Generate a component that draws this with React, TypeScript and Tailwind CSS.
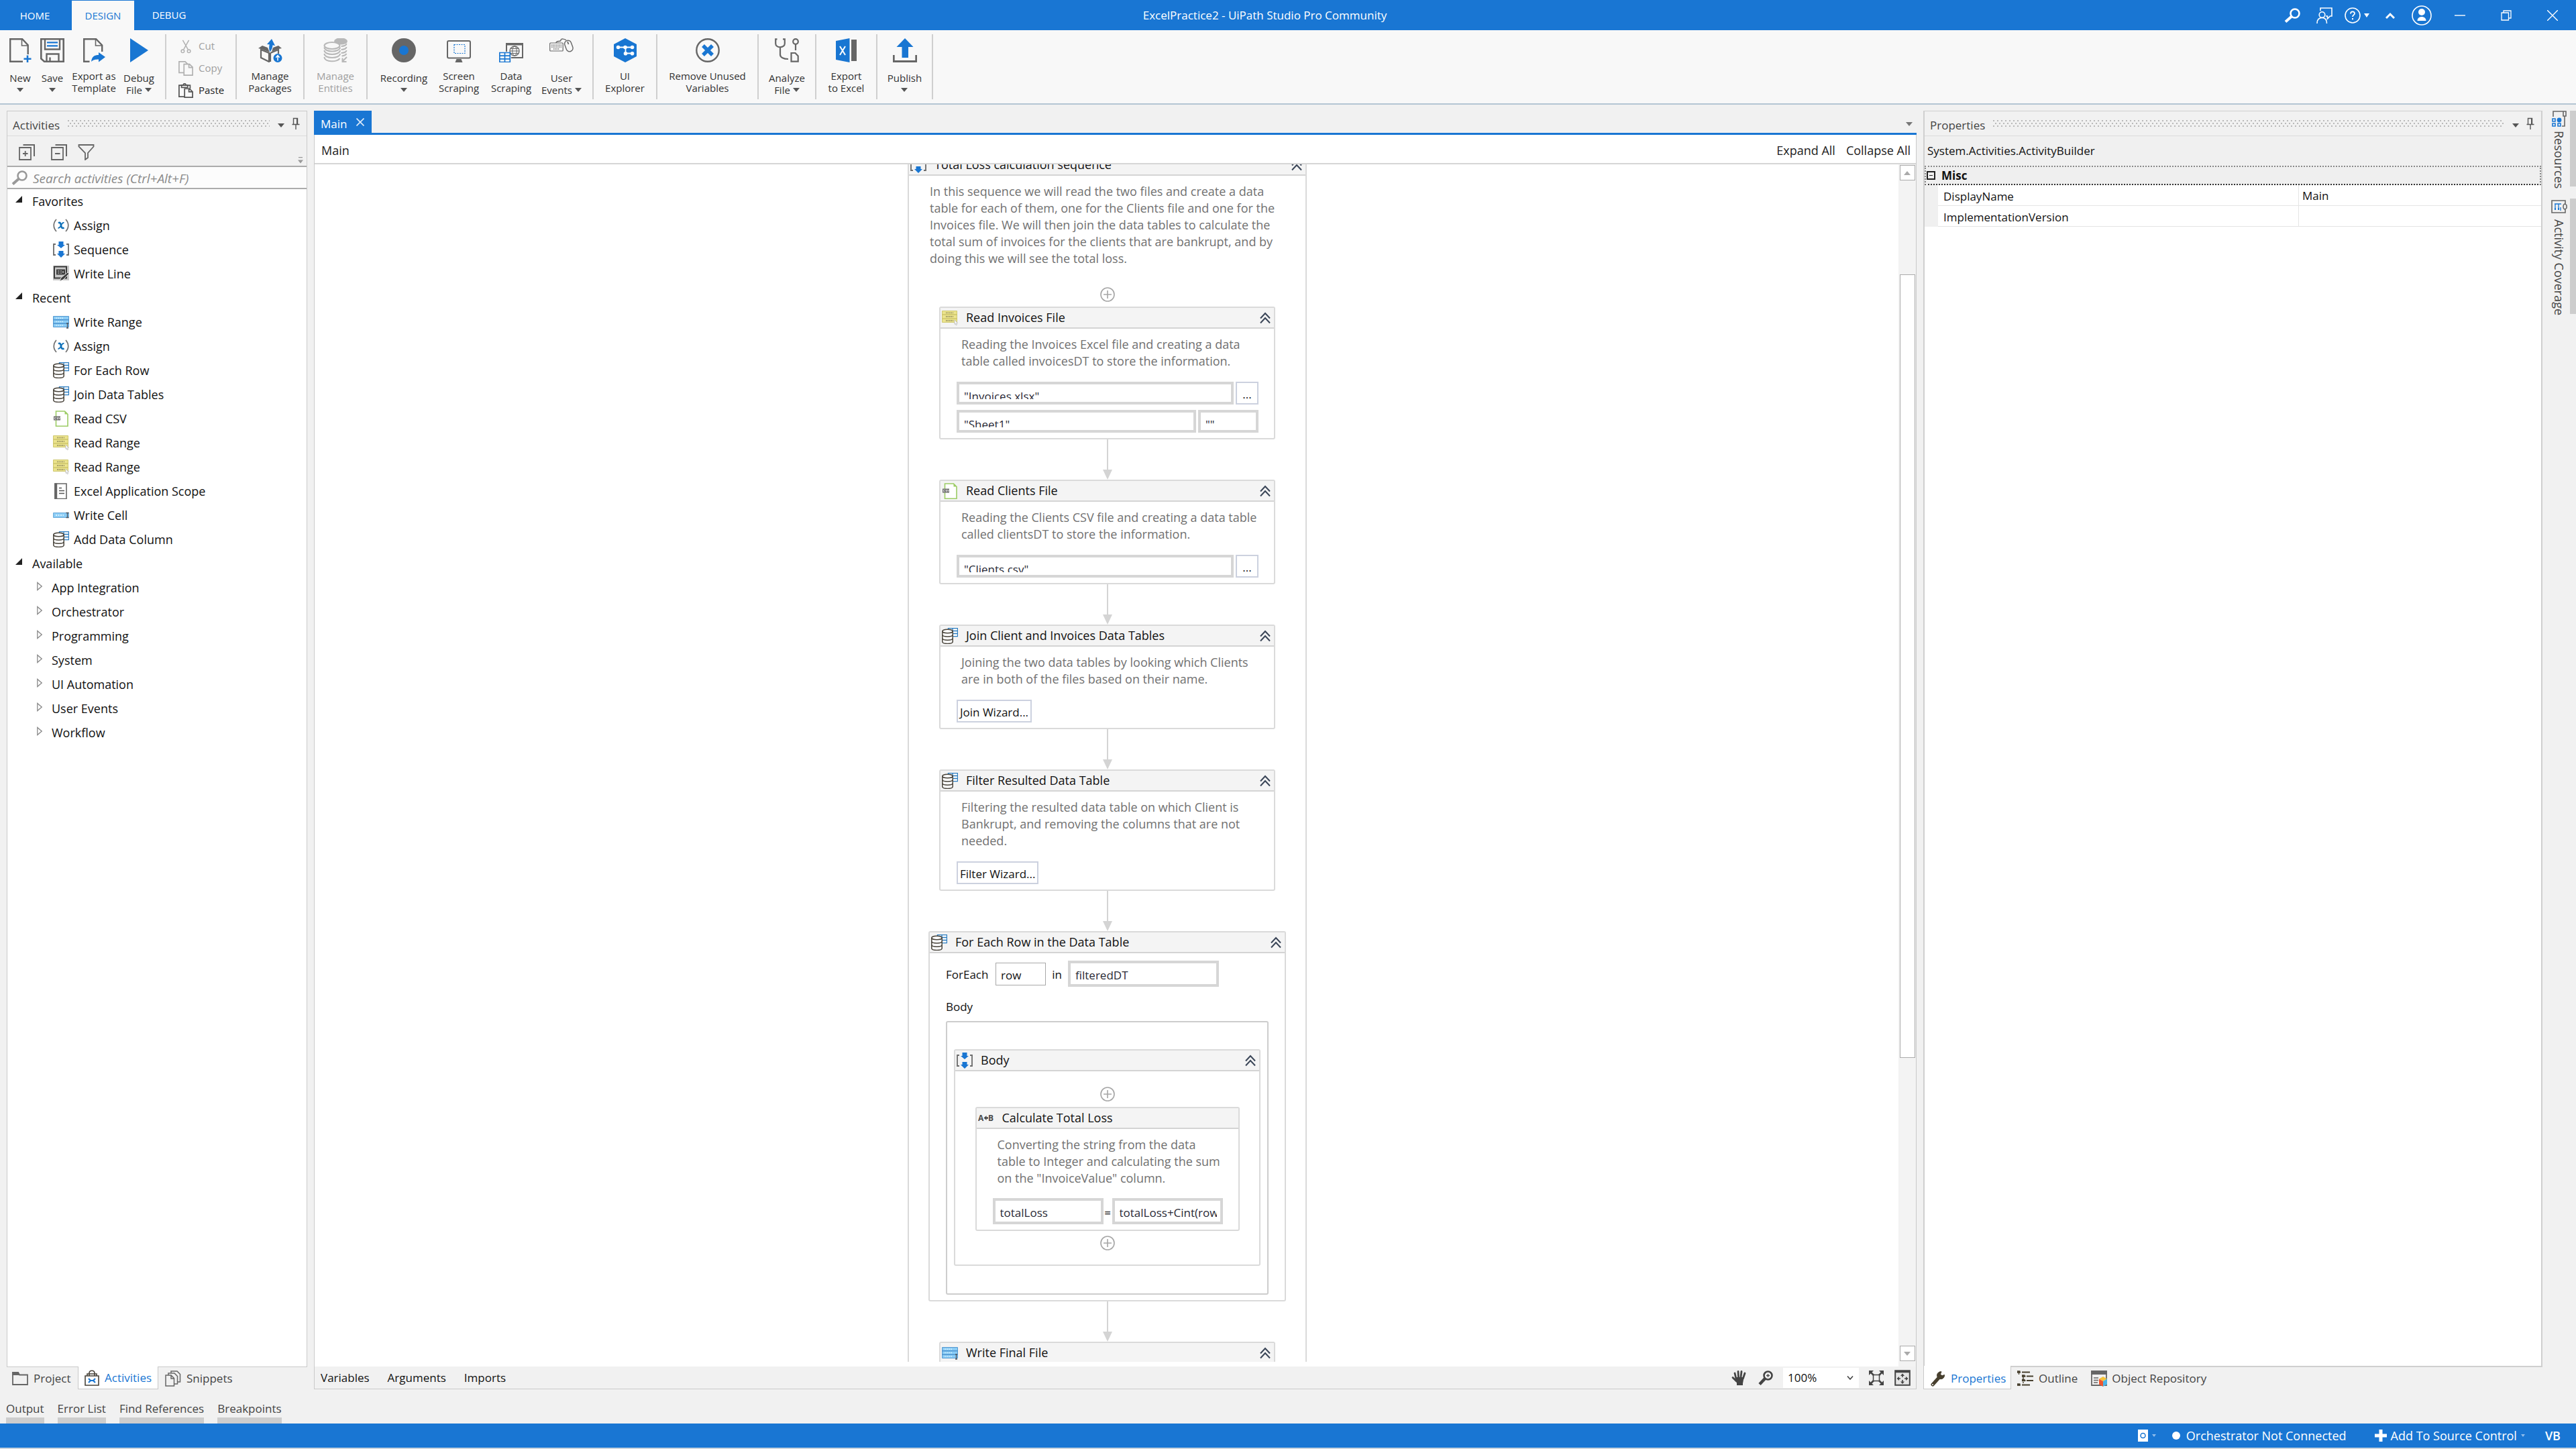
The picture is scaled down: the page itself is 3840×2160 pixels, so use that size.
import type { ReactNode } from "react";

type IconProps = { className?: string };

/* ---------- activity icons ---------- */

const AssignIcon = () => (
  <svg viewBox="0 0 24 24" className="size-6 shrink-0">
    <path d="M5 3C0 8.500 0 15.500 5 21M19 3c5 5.500 5 12.500 0 18" fill="none" stroke="#707070" strokeWidth="1.700" />
    <path d="M8 8.500c2.500-1.500 3.500 0 4 3.500s1.500 5 4.500 3.300" fill="none" stroke="#0f70b8" strokeWidth="2.600" />
    <path d="M16.500 8c-2-.6-3.500 1.500-4.600 4s-2.400 4.300-4.400 3.600" fill="none" stroke="#0f70b8" strokeWidth="1.800" />
  </svg>
);

const SequenceIcon = () => (
  <svg viewBox="0 0 24 24" className="size-6 shrink-0">
    <path d="M4 4H1v16h3M20 4h3v16h-3" fill="none" stroke="#6b6b6b" strokeWidth="1.800" />
    <path d="M8.500 0h7v5h2.500l-6 5-6-5h2.500zM8.500 14h7v4h2.500l-6 6-6-6h2.500z" fill="#1976d2" />
  </svg>
);

const WriteLineIcon = () => (
  <svg viewBox="0 0 24 24" className="size-6 shrink-0">
    <path d="M0 0h24v22H0z" fill="#c9c9c9" />
    <path d="M2 1.500h18v17H2z" fill="none" stroke="#3c3c3c" strokeWidth="2" />
    <path d="M5 5.500h13v8H5z" fill="#3c3c3c" />
    <path d="M7 8h2.500M7 11h2.500M11 8h2M11 11h2M15 8v3" stroke="#ddd" strokeWidth="1.200" />
    <path d="M22 10l2 2-9 9-5 2 2-5z" fill="#3c3c3c" stroke="#e5e5e5" strokeWidth="1" />
  </svg>
);

const WriteRangeIcon = () => (
  <svg viewBox="0 0 24 24" className="size-6 shrink-0">
    <path d="M.500 3.500h23v16H.500z" fill="#8accf5" stroke="#5598d0" />
    <path d="M0 8.800h24M0 14.200h24" stroke="#4c93d0" strokeWidth="1.400" />
    <path d="M4 6.200h12M4 11.500h12M4 17h12" stroke="#c9e9fc" strokeWidth="1.600" strokeDasharray="2 1" />
    <path d="M20 14h3M21.500 14v7M20 21h3" stroke="#4d5560" strokeWidth="1.300" />
  </svg>
);

const WriteCellIcon = () => (
  <svg viewBox="0 0 24 24" className="size-6 shrink-0">
    <path d="M.500 8.500h23v7H.500z" fill="#8accf5" stroke="#6aa9d8" />
    <path d="M4 12h12" stroke="#d9f0fd" strokeWidth="1.800" strokeDasharray="2 1.500" />
    <path d="M19.500 8.500h4M21.500 8.500v7M19.500 15.500h4" stroke="#4d5560" strokeWidth="1.300" />
  </svg>
);

const ReadRangeIcon = () => (
  <svg viewBox="0 0 24 24" className="size-6 shrink-0">
    <path d="M.500 1.500h22v17H.500z" fill="#ebe38d" stroke="#cfc870" />
    <path d="M0 7h23M0 13h23" stroke="#cdc569" strokeWidth="1.300" />
    <path d="M6 4.300h11M6 10h11M6 16h11" stroke="#9a9460" strokeWidth="1.800" strokeDasharray="1.500 1" />
    <path d="M19 15l4.500 4.500-2 .2 1 2.500-1.300.5-1-2.400-1.200 1z" fill="#fff" stroke="#b5b5b5" strokeWidth=".8" />
  </svg>
);

const DatabaseIcon = () => (
  <svg viewBox="0 0 24 24" className="size-6 shrink-0">
    <path d="M9.500.700h14v12h-14zM9.500 4.500h14M9.500 8.500h14M16 .700v12" fill="#fff" stroke="#2b7cc0" strokeWidth="1.300" />
    <path d="M.800 5v15.500c0 4 15.400 4 15.400 0V5" fill="#fff" />
    <ellipse cx="8.500" cy="5" rx="7.700" ry="2.800" fill="#fff" stroke="#48433a" strokeWidth="1.500" />
    <path d="M.800 5v15.500c0 3.900 15.400 3.900 15.400 0V5M.800 10c0 3.900 15.400 3.900 15.400 0M.800 15.300c0 3.900 15.400 3.900 15.400 0" fill="none" stroke="#48433a" strokeWidth="1.500" />
  </svg>
);

const CsvIcon = () => (
  <svg viewBox="0 0 24 24" className="size-6 shrink-0">
    <path d="M4.500 1h13l4.500 4.500V23.300H4.500z" fill="#fff" stroke="#9ccc65" strokeWidth="1.600" />
    <path d="M17.500 1v4.500H22z" fill="#9ccc65" />
    <path d="M1 8.500h10v6H1z" fill="#6a6a6a" />
    <path d="M4.500 10.300H2.500v2.500h2M7.500 10.300H6v1.200h1.300v1.300H5.800M8.500 10l1 2.800 1-2.800" fill="none" stroke="#eee" strokeWidth=".8" />
  </svg>
);

const ExcelScopeIcon = () => (
  <svg viewBox="0 0 24 24" className="size-6 shrink-0">
    <path d="M3 1h17v22.500H3z" fill="#fff" stroke="#666" strokeWidth="1.600" />
    <path d="M2.200.300h4V24h-4z" fill="#666" />
    <path d="M9 7.500h4M9 11.500h8M9 15.500h8" stroke="#555" strokeWidth="1.400" />
  </svg>
);

const AssignBadge = () => (
  <svg viewBox="0 0 24 24" className="size-6 shrink-0" fontFamily="Open Sans" fontWeight="700" fontSize="12" fill="#4a4a4a">
    <text x="0" y="16">A</text>
    <text x="15" y="16">B</text>
    <path d="M8.500 11.500l4-3.500v2.300H15v2.400h-2.500V15z" />
  </svg>
);

/* ---------- shared bits ---------- */

const CaretDown = ({ className = "fill-[#555]" }: IconProps) => (
  <svg viewBox="0 0 10 6" className={"h-[6px] w-[10px] shrink-0 " + className}>
    <path d="M0 0h10L5 6z" />
  </svg>
);

const PinIcon = () => (
  <svg viewBox="0 0 12 18" className="h-[18px] w-3" fill="none" stroke="#555" strokeWidth="1.400">
    <path d="M2.500 1.500h6v9h-6zM.500 10.500h11M6 10.500V18" />
    <path d="M8 1.500v9" strokeWidth="2" />
  </svg>
);

const SearchGlass = ({ className = "" }: IconProps) => (
  <svg viewBox="0 0 24 22" className={className} fill="none" stroke="currentColor">
    <circle cx="16" cy="8" r="6.500" strokeWidth="2.600" />
    <path d="M11 12.500L2 20.500" strokeWidth="4" />
  </svg>
);

const GripDots = ({ id }: { id: string }) => (
  <svg className="h-[10px] min-w-0 flex-1">
    <defs>
      <pattern id={id} width="6" height="8" patternUnits="userSpaceOnUse">
        <path d="M0 0h2v2H0zM3 4h2v2H3z" fill="#b9b9b9" />
      </pattern>
    </defs>
    <rect width="100%" height="10" fill={`url(#${id})`} />
  </svg>
);

const PanelHeader = ({ title, id }: { title: string; id: string }) => (
  <div className="flex h-[37px] shrink-0 items-center border-b border-[#dcdcdc] pl-2 pr-[10px]">
    <h2 className="mr-3 pt-[6px] text-[17px] text-[#444]">{title}</h2>
    <GripDots id={id} />
    <button aria-label={title + " window options"} className="ml-3 pt-[6px]">
      <CaretDown className="fill-[#555]" />
    </button>
    <button aria-label={"Pin " + title} className="ml-[11px]">
      <PinIcon />
    </button>
  </div>
);

/* ---------- ribbon ---------- */

const NewIcon = () => (
  <svg viewBox="0 0 33 36" className="h-9 w-[33px]" fill="none">
    <path d="M20 34.800H1.200V1.200h18l8.500 9V24" stroke="#666" strokeWidth="2.400" />
    <path d="M18.500 1v10h9" stroke="#666" strokeWidth="1.600" />
    <path d="M27 25.500v10.500M21.500 30.700h11" stroke="#1976d2" strokeWidth="2.600" />
  </svg>
);
const SaveIcon = () => (
  <svg viewBox="0 0 36 36" className="size-9" fill="none">
    <path d="M1.300 1.300h33.400v33.400H6L1.300 30.500z" stroke="#666" strokeWidth="2.600" />
    <path d="M7 1v15.500h22V1M9.500 35V23.500h18V35M14.500 35v-6.500" stroke="#666" strokeWidth="2.400" />
    <path d="M10 6.300h16M10 11.300h16" stroke="#1976d2" strokeWidth="2.200" />
  </svg>
);
const ExportTemplateIcon = () => (
  <svg viewBox="0 0 33 36" className="h-9 w-[33px]" fill="none">
    <path d="M9.500 34.800H1.200V1.200h18l9 9.300V20" stroke="#666" strokeWidth="2.400" />
    <path d="M18.500 1v10h9.500" stroke="#666" strokeWidth="1.600" />
    <path d="M12 35c1-8 5-10 11-10v-4l10 7-10 7.500v-4c-5 0-8 .5-11 3.500z" fill="#1976d2" />
  </svg>
);
const PlayIcon = () => (
  <svg viewBox="0 0 27 36" className="h-9 w-[27px]">
    <path d="M0 0l27 18L0 36z" fill="#1976d2" />
  </svg>
);
const PackagesIcon = () => (
  <svg viewBox="0 0 36 36" className="size-9">
    <path d="M4 17l12 5v13L4 29z" fill="none" stroke="#666" strokeWidth="2.200" />
    <path d="M18 22l12-5v6M18 22v13" fill="none" stroke="#666" strokeWidth="2.200" />
    <path d="M6 11l8 3 3 7-13-5-4-1zM30 11l-8 3-2 6 10-4 5-1z" fill="#666" />
    <path d="M13 9L20 1l5 10-3.500-.8c-.3 4-1.500 7-4 10-1.500-3-1.800-6-.8-11z" fill="#1976d2" />
    <circle cx="29" cy="29.500" r="6.500" fill="#1976d2" />
    <path d="M29 33.500v-7M26.300 28.700l2.700-3 2.700 3" fill="none" stroke="#fff" strokeWidth="1.500" />
  </svg>
);
const EntitiesIcon = () => (
  <svg viewBox="0 0 36 36" className="size-9" fill="none" stroke="#b8b8b8" strokeWidth="2">
    <ellipse cx="26" cy="4.500" rx="9" ry="4" fill="#b8b8b8" />
    <path d="M34.500 8c0 2-3 4-8 4M34.500 13c0 2-3 4-8 4M34.500 18c0 2-3 4-8 4M34.500 23c-1 2-3 3-7 3.500" />
    <ellipse cx="13" cy="11" rx="11.500" ry="5" fill="#f8f8f8" />
    <path d="M1.500 13.500c0 8 23 8 23.500 0M1.500 18c0 8 23 8 23.500 0M1.500 23c0 8 23 8 23.500 0M1.500 28c0 8 20 8 23 2" />
    <path d="M35 28l-6.500 6.500M28.500 29.500v5.500h6" />
  </svg>
);
const RecordIcon = () => (
  <svg viewBox="0 0 36 36" className="size-9">
    <circle cx="18" cy="18" r="18" fill="#666" />
    <circle cx="18" cy="18" r="7" fill="#1976d2" />
  </svg>
);
const ScreenIcon = () => (
  <svg viewBox="0 0 36 36" className="size-9" fill="none">
    <rect x="1" y="4" width="34" height="25.500" rx="2" stroke="#666" strokeWidth="2" />
    <path d="M14.500 31h7l2 5h-11z" fill="#666" />
    <path d="M11 9.500h16v13H11z" stroke="#1976d2" strokeWidth="1.200" strokeDasharray="2 1.500" />
  </svg>
);
const DataScrapeIcon = () => (
  <svg viewBox="0 0 36 36" className="size-9" fill="none">
    <path d="M11 20V8.500h24v20.500H18" stroke="#666" strokeWidth="2" />
    <path d="M10 7h26v3.500H10z" fill="#666" />
    <circle cx="23" cy="19" r="7" stroke="#666" strokeWidth="1.300" />
    <ellipse cx="23" cy="19" rx="3.200" ry="7" stroke="#666" strokeWidth="1" />
    <path d="M16 19h14M17 15.500h12M17 22.500h12" stroke="#666" />
    <path d="M.800 21.500h15.500v14H.800z" fill="#f8f8f8" />
    <path d="M.800 21.500h15.500v14H.800zM8.500 21.500v14M.800 26.200h15.500M.800 30.800h15.500" stroke="#1976d2" strokeWidth="1.700" />
  </svg>
);
const UserEventsIcon = () => (
  <svg viewBox="0 0 36 36" className="size-9" fill="none" stroke="#666">
    <rect x=".7" y="7" width="19.500" height="12" rx="1" strokeWidth="1.200" />
    <path d="M3 10.300h15M3 13h15M6 16h9" strokeWidth="1.600" strokeDasharray="1.300 1" />
    <path d="M10 7c0-4 7-1 7-4s6-2 8 0" strokeWidth="1.500" />
    <rect x="24" y="3" width="10" height="17" rx="5" transform="rotate(-20 29 12)" strokeWidth="1.400" />
    <path d="M27 5l1.500 4" strokeWidth="1.800" />
  </svg>
);
const ExplorerIcon = () => (
  <svg viewBox="0 0 34 36" className="h-9 w-[34px]">
    <path d="M17 0l17 9v18l-17 9L0 27V9z" fill="#1976d2" />
    <path d="M6 13.500h22M17.500 13.500v9h10" fill="none" stroke="#fff" strokeWidth="1.800" />
    <g fill="#fff">
      <circle cx="6.500" cy="13.500" r="2.800" /><circle cx="17" cy="13.500" r="2.800" /><circle cx="27.500" cy="13.500" r="2.800" />
      <circle cx="17.500" cy="22.800" r="2.800" /><circle cx="27.500" cy="22.800" r="2.800" />
    </g>
  </svg>
);
const RemoveIcon = () => (
  <svg viewBox="0 0 36 36" className="size-9" fill="none">
    <circle cx="18" cy="18" r="16.700" stroke="#666" strokeWidth="2.400" />
    <path d="M11 11l14 14M25 11L11 25" stroke="#1976d2" strokeWidth="5.500" />
  </svg>
);
const AnalyzeIcon = () => (
  <svg viewBox="0 0 36 36" className="size-9" fill="none" stroke="#666" strokeWidth="2.200">
    <path d="M3.500 1.300H1.200V8c0 7 13.600 7 13.600 0V1.300H12M8 13.500v11c0 4 5 6.500 12 6.500" />
    <circle cx="31" cy="5" r="3.800" />
    <path d="M31 9v9M24.500 22h6l4.200 4.500v8.200H24.500z" />
  </svg>
);
const ExcelIcon = () => (
  <svg viewBox="0 0 31 36" className="h-9 w-[31px]">
    <path d="M0 4L20.500 0v36L0 32z" fill="#1976d2" />
    <path d="M23 2h8v32h-8z" fill="#666" />
    <path d="M6 12l8 13M14 12L6 25" stroke="#fff" strokeWidth="2" />
  </svg>
);
const PublishIcon = () => (
  <svg viewBox="0 0 36 36" className="size-9">
    <path d="M18 0l12.500 13H23v16h-9.500V13H5.500z" fill="#1976d2" />
    <path d="M1.300 25v9.500h33.400V25" fill="none" stroke="#666" strokeWidth="2.800" />
  </svg>
);

type RibbonItem = { icon: ReactNode; lines: string[]; arrow?: boolean; width: string; disabled?: boolean };

const RibbonButton = ({ icon, lines, arrow, width, disabled }: RibbonItem) => (
  <button className={"flex shrink-0 flex-col items-center pt-3 " + width} disabled={disabled}>
    {icon}
    <span
      className={
        "flex flex-col items-center whitespace-nowrap text-[15px] leading-[18px] " +
        (arrow ? "mt-[14px] " : "mt-[11px] ") +
        (disabled ? "text-[#a0a0a0]" : "text-[#333]")
      }
    >
      <span>{lines[0]}</span>
      {lines[1] && !arrow && <span>{lines[1]}</span>}
      {arrow && (
        <span className="flex h-[18px] items-center gap-1">
          {lines[1]}
          <CaretDown />
        </span>
      )}
    </span>
  </button>
);

const Divider = () => <div className="my-[6px] w-[2px] shrink-0 bg-[#cfcfcf]" />;

const groups: { pad: string; items: RibbonItem[] }[] = [
  { pad: "w-[99px]", items: [{ icon: <PackagesIcon />, lines: ["Manage", "Packages"], width: "w-full" }] },
  { pad: "w-[92px]", items: [{ icon: <EntitiesIcon />, lines: ["Manage", "Entities"], width: "w-full", disabled: true }] },
  {
    pad: "pl-2 pr-[13px]",
    items: [
      { icon: <RecordIcon />, lines: ["Recording"], arrow: true, width: "w-[92px]" },
      { icon: <ScreenIcon />, lines: ["Screen", "Scraping"], width: "w-[72px]" },
      { icon: <DataScrapeIcon />, lines: ["Data", "Scraping"], width: "w-[84px]" },
      { icon: <UserEventsIcon />, lines: ["User", "Events"], arrow: true, width: "w-[66px]" },
    ],
  },
  { pad: "w-[93px]", items: [{ icon: <ExplorerIcon />, lines: ["UI", "Explorer"], width: "w-full" }] },
  { pad: "w-[149px]", items: [{ icon: <RemoveIcon />, lines: ["Remove Unused", "Variables"], width: "w-full" }] },
  { pad: "w-[84px]", items: [{ icon: <AnalyzeIcon />, lines: ["Analyze", "File"], arrow: true, width: "w-full" }] },
  { pad: "w-[89px]", items: [{ icon: <ExcelIcon />, lines: ["Export", "to Excel"], width: "w-full" }] },
  { pad: "w-[81px]", items: [{ icon: <PublishIcon />, lines: ["Publish"], arrow: true, width: "w-full" }] },
];

const ClipboardRow = ({ icon, label, disabled }: { icon: ReactNode; label: string; disabled?: boolean }) => (
  <button disabled={disabled} className={"flex h-[33px] items-center gap-2 text-[15px] " + (disabled ? "text-[#a0a0a0]" : "text-[#222]")}>
    {icon}
    {label}
  </button>
);

const Ribbon = () => (
  <div className="flex h-[111px] shrink-0 border-b-2 border-[#b4c5d3] bg-[#f8f8f8]">
    <div className="flex pl-[6px] pr-[10px]">
      <RibbonButton icon={<NewIcon />} lines={["New"]} arrow width="w-12" />
      <RibbonButton icon={<SaveIcon />} lines={["Save"]} arrow width="w-12" />
      <RibbonButton icon={<ExportTemplateIcon />} lines={["Export as", "Template"]} width="w-[76px]" />
      <RibbonButton icon={<PlayIcon />} lines={["Debug", "File"]} arrow width="w-[58px]" />
    </div>
    <Divider />
    <div className="flex w-[103px] flex-col pl-[18px] pt-[7px]">
      <ClipboardRow
        disabled
        label="Cut"
        icon={
          <svg viewBox="0 0 24 24" className="size-[22px]" fill="none" stroke="#b0b0b0" strokeWidth="1.600">
            <path d="M7 2l8.500 15M17 2L8.500 17" />
            <circle cx="7" cy="20" r="2.500" /><circle cx="17" cy="20" r="2.500" />
          </svg>
        }
      />
      <ClipboardRow
        disabled
        label="Copy"
        icon={
          <svg viewBox="0 0 24 24" className="size-[22px]" fill="#f8f8f8" stroke="#b0b0b0" strokeWidth="1.800">
            <path d="M1 1h10l4 4v14H1z" />
            <path d="M9 5h9l5 5v13H9zM17 5v5.500h6" />
          </svg>
        }
      />
      <ClipboardRow
        label="Paste"
        icon={
          <svg viewBox="0 0 24 24" className="size-[22px]" fill="#f8f8f8" stroke="#555" strokeWidth="1.900">
            <path d="M10 22H1V3.500h18V9M5 7V3h3c0-3 4-3 4 0h3v4z" />
            <path d="M10 9h8l5 5v9H10zM17 9v5h6" />
          </svg>
        }
      />
    </div>
    <Divider />
    {groups.map((g, i) => (
      <div key={i} className="flex">
        <div className={"flex " + g.pad}>
          {g.items.map((it) => (
            <RibbonButton key={it.lines.join()} {...it} />
          ))}
        </div>
        <Divider />
      </div>
    ))}
  </div>
);

/* ---------- title bar ---------- */

const TitleBar = () => (
  <header className="flex h-[45px] shrink-0 items-stretch bg-[#1976d3] text-white">
    <nav className="flex w-[330px] items-stretch text-[15px]">
      <button className="w-[107px] pr-[3px] pt-[2px] text-center">HOME</button>
      <button className="mt-px w-[93px] bg-[#f8f8f8] text-center text-[#1976d3]">DESIGN</button>
      <button className="w-[104px] text-center">DEBUG</button>
    </nav>
    <h1 className="flex-1 self-center pl-9 text-center text-[17px]">ExcelPractice2 - UiPath Studio Pro Community</h1>
    <div className="flex w-[435px] items-center">
      <button aria-label="Search"><SearchGlass className="h-[22px] w-6" /></button>
      <button aria-label="Feedback" className="ml-6">
        <svg viewBox="0 0 24 24" className="size-6" fill="none" stroke="currentColor" strokeWidth="1.600">
          <path d="M6 5V1h17v12h-2.500l-4 4v-4H14" />
          <circle cx="8.500" cy="11" r="4.300" />
          <path d="M1 24c0-5.500 3-8.500 7.500-8.500S15.500 18.500 15.500 24" />
        </svg>
      </button>
      <button aria-label="Help" className="ml-[18px] flex items-center gap-[5px]">
        <svg viewBox="0 0 24 24" className="size-6" fill="none" stroke="currentColor">
          <circle cx="12" cy="12" r="11" strokeWidth="1.600" />
          <path d="M9 9.500c0-4 6-4 6-.5 0 2.500-3 2.300-3 5" strokeWidth="1.800" />
          <path d="M12 16v2.200" strokeWidth="2" />
        </svg>
        <svg viewBox="0 0 8 6" className="h-[6px] w-2 fill-white"><path d="M0 0h8L4 6z" /></svg>
      </button>
      <button aria-label="Collapse ribbon" className="ml-6">
        <svg viewBox="0 0 14 10" className="h-[10px] w-[14px]" fill="none" stroke="currentColor" strokeWidth="3"><path d="M1 9l6-6 6 6" /></svg>
      </button>
      <button aria-label="Account" className="ml-[25px]">
        <svg viewBox="0 0 30 30" className="size-[30px]" fill="none">
          <circle cx="15" cy="15" r="14" stroke="#fff" strokeWidth="1.600" />
          <circle cx="15" cy="10" r="5" fill="#fff" />
          <path d="M8.500 23c0-8 13-8 13 0z" fill="#fff" />
        </svg>
      </button>
      <button aria-label="Minimize" className="ml-[34px]">
        <svg viewBox="0 0 16 16" className="size-4" stroke="#fff" strokeWidth="1.400"><path d="M0 8h16" /></svg>
      </button>
      <button aria-label="Restore" className="ml-[53px]">
        <svg viewBox="0 0 16 16" className="size-4" fill="none" stroke="#fff" strokeWidth="1.300"><path d="M1 4h10.500v11H1zM4 4V1h11v11h-3.500" /></svg>
      </button>
      <button aria-label="Close" className="ml-[53px]">
        <svg viewBox="0 0 16 16" className="size-4" stroke="#fff" strokeWidth="1.400"><path d="M0 0l16 16M16 0L0 16" /></svg>
      </button>
    </div>
  </header>
);

/* ---------- activities panel ---------- */

const Category = ({ label }: { label: string }) => (
  <li className="flex h-9 items-center pl-3">
    <svg viewBox="0 0 10 10" className="mb-[6px] size-[10px] fill-[#222]"><path d="M10 0v10H0z" /></svg>
    <span className="ml-[15px]">{label}</span>
  </li>
);

const Item = ({ icon, label }: { icon: ReactNode; label: string }) => (
  <li className="flex h-9 items-center pl-[68px]">
    {icon}
    <span className="ml-[7px]">{label}</span>
  </li>
);

const TreeNode = ({ label }: { label: string }) => (
  <li className="flex h-9 items-center pl-11">
    <svg viewBox="0 0 8 14" className="mb-1 h-[14px] w-2" fill="none" stroke="#8a8a8a" strokeWidth="1.300"><path d="M.800 1.500v11L7.200 7z" /></svg>
    <span className="ml-[14px]">{label}</span>
  </li>
);

const StackedBox = ({ plus }: { plus?: boolean }) => (
  <svg viewBox="0 0 24 24" className="size-6" fill="none" stroke="#666" strokeWidth="1.800">
    <path d="M1 5h17v18H1zM6 14h7.500" />
    <path d="M6.500 1h16.500v17" strokeWidth="2" />
    {plus && <path d="M9.700 10v8" />}
  </svg>
);

const LeftTab = ({ icon, label, active, className = "" }: { icon: ReactNode; label: string; active?: boolean; className?: string }) => (
  <button
    className={
      "flex items-center gap-2 pt-px " +
      (active ? "relative -mt-px border border-t-0 border-[#c8c8c8] bg-white text-[#1976d3] " : "text-[#444] ") +
      className
    }
  >
    {icon}
    {label}
  </button>
);

const LeftPanel = () => (
  <aside className="flex w-[448px] shrink-0 flex-col">
    <section className="flex min-h-0 flex-1 flex-col overflow-hidden border border-[#cacaca] bg-white">
      <div className="bg-[#f1f1f1]">
        <PanelHeader title="Activities" id="grip-activities" />
      </div>
      <div className="flex h-[46px] shrink-0 items-center border-b-2 border-[#ababab] bg-[#f1f1f1] pl-[17px] pr-[5px] pt-1">
        <button aria-label="Expand all"><StackedBox plus /></button>
        <button aria-label="Collapse all" className="ml-6"><StackedBox /></button>
        <button aria-label="Filter" className="ml-4">
          <svg viewBox="0 0 25 24" className="h-6 w-[25px]" fill="none" stroke="#666" strokeWidth="1.800"><path d="M1.500 1h22v2.500l-8.500 9.500v7l-4 3V13L1.500 3.500z" /></svg>
        </button>
        <svg viewBox="0 0 8 10" className="ml-auto mt-6 h-[10px] w-2" fill="#999"><path d="M1 0h6v1.300H1zM0 4.500h8L4 9.500z" /></svg>
      </div>
      <label className="flex h-[33px] shrink-0 items-center border-b-2 border-[#ababab] bg-[#fcfcfc] pl-[6px]">
        <SearchGlass className="h-[22px] w-6 text-[#999]" />
        <input aria-label="Search activities" placeholder="Search activities (Ctrl+Alt+F)" className="ml-2 min-w-0 flex-1 bg-transparent pt-[3px] text-[19px] italic outline-none placeholder:text-[#8a8a8a]" />
      </label>
      <ul className="text-[18px] text-[#111]">
        <Category label="Favorites" />
        <Item icon={<AssignIcon />} label="Assign" />
        <Item icon={<SequenceIcon />} label="Sequence" />
        <Item icon={<WriteLineIcon />} label="Write Line" />
        <Category label="Recent" />
        <Item icon={<WriteRangeIcon />} label="Write Range" />
        <Item icon={<AssignIcon />} label="Assign" />
        <Item icon={<DatabaseIcon />} label="For Each Row" />
        <Item icon={<DatabaseIcon />} label="Join Data Tables" />
        <Item icon={<CsvIcon />} label="Read CSV" />
        <Item icon={<ReadRangeIcon />} label="Read Range" />
        <Item icon={<ReadRangeIcon />} label="Read Range" />
        <Item icon={<ExcelScopeIcon />} label="Excel Application Scope" />
        <Item icon={<WriteCellIcon />} label="Write Cell" />
        <Item icon={<DatabaseIcon />} label="Add Data Column" />
        <Category label="Available" />
        {["App Integration", "Orchestrator", "Programming", "System", "UI Automation", "User Events", "Workflow"].map((t) => (
          <TreeNode key={t} label={t} />
        ))}
      </ul>
    </section>
    <div className="flex h-[33px] shrink-0 text-[17px]">
      <LeftTab
        label="Project"
        className="w-[106px] pl-2"
        icon={<svg viewBox="0 0 24 20" className="h-5 w-6" fill="none" stroke="#666" strokeWidth="1.800"><path d="M1 19V1h8l2 3.500h12V19z" /><path d="M1 1h8l1.500 3H1z" fill="#666" /></svg>}
      />
      <LeftTab
        active
        label="Activities"
        className="w-[120px] pl-[9px]"
        icon={
          <svg viewBox="0 0 22 24" className="h-6 w-[22px]" fill="none" stroke="#48433a" strokeWidth="1.600">
            <path d="M1 9h20v14H1zM4 9V6h14v3M7 9V5c0-5 8-5 8 0v4" />
            <path d="M6 13l3 3h4l3-3M6 19l3-3h4l3 3" stroke="#1976d2" strokeWidth="2.200" />
          </svg>
        }
      />
      <LeftTab
        label="Snippets"
        className="pl-[10px]"
        icon={
          <svg viewBox="0 0 24 24" className="size-6" fill="#f1f1f1" stroke="#666" strokeWidth="1.500">
            <path d="M9 1h9l4.500 4.500V17H9z" /><path d="M5 4h9l4.500 4.500V20H5z" /><path d="M1 7h8l4.500 4.500V23H1zM9 7v5h4.500" />
          </svg>
        }
      />
    </div>
  </aside>
);

/* ---------- workflow canvas ---------- */

const Arrow = () => (
  <svg viewBox="0 0 16 60" className="mx-auto h-[60px] w-4 shrink-0">
    <path d="M8 0v46" stroke="#d4d4d4" strokeWidth="2" />
    <path d="M1 45h14L8 60z" fill="#d4d4d4" />
  </svg>
);

const AddButton = ({ className = "" }: IconProps) => (
  <button aria-label="Add activity" className={"mx-auto block size-[22px] shrink-0 " + className}>
    <svg viewBox="0 0 22 22" fill="none" stroke="#a6a6a6" strokeWidth="1.600">
      <circle cx="11" cy="11" r="10" />
      <path d="M11 5v12M5 11h12" />
    </svg>
  </button>
);

type CardProps = { icon: ReactNode; title: string; collapsible?: boolean; className?: string; children?: ReactNode };

const Card = ({ icon, title, collapsible = true, className = "", children }: CardProps) => (
  <section className={"mx-auto shrink-0 rounded-[3px] border-2 border-[#dadada] bg-white " + className}>
    <div className="flex h-[31px] items-center border-b-2 border-[#d4d4d4] bg-[#f4f4f4] pl-[2px] pr-[5px]">
      {icon}
      <h3 className="ml-3 flex-1 whitespace-nowrap text-[18px] text-[#111]">{title}</h3>
      {collapsible && (
        <button aria-label={"Collapse " + title}>
          <svg viewBox="0 0 16 18" className="h-[18px] w-4" fill="none" stroke="#3a4557" strokeWidth="2"><path d="M1 9.500l7-7.500 7 7.500M1 16.500L8 9l7 7.500" /></svg>
        </button>
      )}
    </div>
    {children}
  </section>
);

const Note = ({ children }: { children: string }) => (
  <p className="whitespace-pre pb-px pl-[31px] pt-[11px] text-[18px] leading-[25px] text-[#717171]">{children}</p>
);

const Expression = ({ value, label, low, className = "" }: { value: string; label: string; low?: boolean; className?: string }) => (
  <div className={"border-4 border-[#d6d6d6] bg-white pr-[5px] " + (low ? "h-[34px] pb-1 " : "h-[39px] ") + className}>
    <input
      aria-label={label}
      defaultValue={value}
      className={"block h-full w-full bg-transparent pl-[7px] text-[17px] text-[#2a2a36] outline-none " + (low ? "pt-3" : "pt-1")}
    />
  </div>
);

const SmallButton = ({ children, className = "" }: { children: ReactNode; className?: string }) => (
  <button className={"h-[34px] whitespace-nowrap border-2 border-[#ccd1df] bg-white pt-1 text-[17px] leading-[26px] text-[#111] " + className}>{children}</button>
);

const Canvas = () => (
  <div className="mb-[7px] min-h-0 min-w-0 flex-1 overflow-hidden pl-[2px]">
    <Card
      icon={<SequenceIcon />}
      title="Total Loss calculation sequence"
      className="-mt-4 min-h-[2000px] w-[595px]"
    >
      <Note>
        {"In this sequence we will read the two files and create a data\ntable for each of them, one for the Clients file and one for the\nInvoices file. We will then join the data tables to calculate the\ntotal sum of invoices for the clients that are bankrupt, and by\ndoing this we will see the total loss."}
      </Note>
      <AddButton className="mb-[7px] mt-[29px]" />
      <Card icon={<ReadRangeIcon />} title="Read Invoices File" className="w-[501px]">
        <Note>{"Reading the Invoices Excel file and creating a data\ntable called invoicesDT to store the information."}</Note>
        <div className="flex flex-col gap-2 pb-2 pl-6 pr-[23px] pt-[17px]">
          <div className="flex gap-[3px]">
            <Expression low label="Workbook path" value={'"Invoices.xlsx"'} className="flex-1" />
            <SmallButton className="w-[34px]">...</SmallButton>
          </div>
          <div className="flex gap-[3px]">
            <Expression low label="Sheet name" value={'"Sheet1"'} className="flex-1" />
            <Expression low label="Range" value={'""'} className="w-[90px]" />
          </div>
        </div>
      </Card>
      <Arrow />
      <Card icon={<CsvIcon />} title="Read Clients File" className="w-[501px]">
        <Note>{"Reading the Clients CSV file and creating a data table\ncalled clientsDT to store the information."}</Note>
        <div className="flex gap-[3px] pb-2 pl-6 pr-[23px] pt-[17px]">
          <Expression low label="CSV path" value={'"Clients.csv"'} className="flex-1" />
          <SmallButton className="w-[34px]">...</SmallButton>
        </div>
      </Card>
      <Arrow />
      <Card icon={<DatabaseIcon />} title="Join Client and Invoices Data Tables" className="w-[501px]">
        <Note>{"Joining the two data tables by looking which Clients\nare in both of the files based on their name."}</Note>
        <div className="flex pb-2 pl-6 pt-[17px]">
          <SmallButton className="px-[3px]">Join Wizard...</SmallButton>
        </div>
      </Card>
      <Arrow />
      <Card icon={<DatabaseIcon />} title="Filter Resulted Data Table" className="w-[501px]">
        <Note>{"Filtering the resulted data table on which Client is\nBankrupt, and removing the columns that are not\nneeded."}</Note>
        <div className="flex pb-2 pl-6 pt-[17px]">
          <SmallButton className="px-[3px]">Filter Wizard...</SmallButton>
        </div>
      </Card>
      <Arrow />
      <Card icon={<DatabaseIcon />} title="For Each Row in the Data Table" className="w-[533px]">
        <div className="px-6 pb-2 pt-[11px] text-[17px] text-[#111]">
          <div className="flex h-[39px] items-center">
            <label htmlFor="row-name" className="w-[74px] pt-[3px]">ForEach</label>
            <input id="row-name" defaultValue="row" className="h-[34px] w-[75px] border border-[#a8a8a8] pl-[7px] pt-[3px] outline-none" />
            <span className="w-[33px] pt-[3px] text-center">in</span>
            <Expression label="Collection" value="filteredDT" className="w-[225px]" />
          </div>
          <p className="mb-[9px] mt-[17px] leading-[25px]">Body</p>
          <div className="rounded-[3px] border-2 border-[#cdcdcd] pb-[41px] pt-10">
            <Card icon={<SequenceIcon />} title="Body" className="w-[457px]">
              <AddButton className="mb-2 mt-[23px]" />
              <Card icon={<AssignBadge />} title="Calculate Total Loss" collapsible={false} className="w-[394px]">
                <Note>{'Converting the string from the data\ntable to Integer and calculating the sum\non the "InvoiceValue" column.'}</Note>
                <div className="flex items-center pb-2 pl-6 pr-[23px] pt-4">
                  <Expression label="To" value="totalLoss" className="min-w-0 flex-1" />
                  <span className="w-[13px] pt-1 text-center">=</span>
                  <Expression label="Value" value={'totalLoss+Cint(row("InvoiceValue"))'} className="min-w-0 flex-1" />
                </div>
              </Card>
              <AddButton className="mb-[21px] mt-[7px]" />
            </Card>
          </div>
        </div>
      </Card>
      <Arrow />
      <Card icon={<WriteRangeIcon />} title="Write Final File" className="w-[501px]" />
    </Card>
  </div>
);

const ScrollBar = () => (
  <div className="flex w-[26px] shrink-0 flex-col items-center bg-[#f3f3f3] pb-2 pt-px">
    <button aria-label="Scroll up" className="flex h-[23px] w-[23px] items-center justify-center border border-[#ababab] bg-white">
      <svg viewBox="0 0 10 6" className="h-[6px] w-[10px] fill-[#aaa]"><path d="M0 6h10L5 0z" /></svg>
    </button>
    <div className="flex w-[23px] flex-1 flex-col">
      <div className="flex-[140]" />
      <div className="flex-[1168] border border-[#ababab] bg-white" />
      <div className="flex-[430]" />
    </div>
    <button aria-label="Scroll down" className="flex h-[23px] w-[23px] items-center justify-center border border-[#ababab] bg-white">
      <CaretDown className="fill-[#aaa]" />
    </button>
  </div>
);

const Designer = () => (
  <main className="flex min-w-0 flex-1 flex-col">
    <div className="flex h-9 shrink-0 items-stretch border-b-[3px] border-[#1976d3]">
      <div className="flex w-[86px] items-center justify-between bg-[#1976d3] pl-[10px] pr-[11px] pt-[6px] text-[17px] text-white">
        Main
        <button aria-label="Close Main" className="pb-[6px]">
          <svg viewBox="0 0 12 12" className="size-3" stroke="#dbe9f8" strokeWidth="1.700"><path d="M.500.500l11 11M11.500.500l-11 11" /></svg>
        </button>
      </div>
      <button aria-label="Open documents" className="ml-auto mr-[6px] pt-[6px]"><CaretDown className="fill-[#777]" /></button>
    </div>
    <div className="flex min-h-0 flex-1 flex-col border border-t-0 border-[#cacaca] bg-white">
      <div className="flex h-11 shrink-0 items-center border-b-2 border-[#d6d6d6] px-2 pl-[10px] pt-1 text-[18px] text-[#222]">
        <span>Main</span>
        <button className="ml-auto">Expand All</button>
        <button className="ml-4">Collapse All</button>
      </div>
      <div className="flex min-h-0 flex-1">
        <Canvas />
        <ScrollBar />
      </div>
      <div className="flex h-[33px] shrink-0 items-center bg-[#f1f1f1] pl-[9px] pr-2 text-[17px] text-[#111]">
        <button>Variables</button>
        <button className="ml-[27px]">Arguments</button>
        <button className="ml-[27px]">Imports</button>
        <button aria-label="Pan" className="ml-auto">
          <svg viewBox="0 0 24 24" className="size-6" fill="none" stroke="#444" strokeWidth="2.800" strokeLinecap="round">
            <path d="M7 13L5 5M10.500 11L10 2.500M14 11l1-8.500M17.500 12.500L20 5M7.500 17L2 11.500" />
            <path d="M7 12h10.500l-1.500 8v2H9v-2z" fill="#444" strokeWidth="2" />
          </svg>
        </button>
        <button aria-label="Zoom" className="ml-[15px]">
          <svg viewBox="0 0 24 24" className="size-6" fill="none" stroke="#444">
            <circle cx="15.500" cy="8.500" r="6" strokeWidth="2.600" />
            <path d="M11 13l-8 8.500" strokeWidth="4.500" />
            <path d="M15.500 6v5M13 8.500h5" strokeWidth="1.300" />
          </svg>
        </button>
        <label className="relative ml-[14px] flex h-[30px] w-[113px] items-center bg-white">
          <select aria-label="Zoom level" defaultValue="100%" className="h-full w-full appearance-none bg-white pl-[7px] text-[17px]">
            <option>50%</option>
            <option>100%</option>
            <option>200%</option>
          </select>
          <svg viewBox="0 0 10 6" className="pointer-events-none absolute right-2 h-[6px] w-[10px]" fill="none" stroke="#444" strokeWidth="1.600"><path d="M1 .500l4 4.500 4-4.500" /></svg>
        </label>
        <button aria-label="Fit to screen" className="ml-[14px]">
          <svg viewBox="0 0 24 24" className="size-6" fill="none" stroke="#444">
            <path d="M7.500 7.500h9v9h-9z" strokeWidth="1.500" />
            <path d="M3 3l5 5M21 3l-5 5M3 21l5-5M21 21l-5-5" strokeWidth="2.600" />
            <path d="M1 1h7L1 8zM23 1h-7l7 7zM1 23h7l-7-7zM23 23h-7l7-7z" fill="#444" stroke="none" />
          </svg>
        </button>
        <button aria-label="Overview" className="ml-[15px]">
          <svg viewBox="0 0 24 24" className="size-6" fill="none" stroke="#444">
            <path d="M1.200 1.200h21.600v21.600H1.200z" fill="#e4e4e4" strokeWidth="2" />
            <path d="M1 3h22" strokeWidth="2.500" />
            <path d="M12 5.500l3 3.500H9zM12 21l3-3.500H9zM3.500 13l3.500-3v6zM20.500 13L17 10v6z" fill="#444" stroke="none" />
            <path d="M12 8v3M12 15v3M6 13h3M15 13h3" strokeWidth="1.600" />
          </svg>
        </button>
      </div>
    </div>
  </main>
);

/* ---------- properties panel ---------- */

const RightPanel = () => (
  <aside className="flex w-[923px] shrink-0 flex-col">
    <section className="flex min-h-0 flex-1 flex-col border-2 border-t border-[#cfcfcf] bg-white">
      <div className="bg-[#f1f1f1]">
        <PanelHeader title="Properties" id="grip-properties" />
      </div>
      <p className="flex h-11 shrink-0 items-center bg-[#f0f0f0] pl-1 text-[17px] text-[#111]">System.Activities.ActivityBuilder</p>
      <table className="w-full border-separate border-spacing-0 text-left text-[17px] leading-[22px] text-[#111]">
        <tbody>
          <tr className="h-[29px] bg-[#efefef]">
            <th colSpan={3} className="border-2 border-dotted border-[#888] border-b-[#333] p-0 font-bold">
              <span className="flex items-center gap-[9px] pl-px">
                <button aria-label="Collapse Misc" className="flex size-[13px] items-center justify-center border-2 border-[#222]">
                  <span className="h-px w-[5px] bg-[#222]" />
                </button>
                Misc
              </span>
            </th>
          </tr>
          {[["DisplayName", "Main"], ["ImplementationVersion", ""]].map(([k, v]) => (
            <tr key={k} className="h-[31px]">
              <td className="w-5 bg-[#f0f0f0]" />
              <th scope="row" className="w-[538px] border-b border-r border-[#e4e4e4] p-0 pl-2 pt-[3px] font-normal">{k}</th>
              <td className="border-b border-[#e4e4e4] p-0 pl-[5px] pt-px">{v}</td>
            </tr>
          ))}
        </tbody>
      </table>
    </section>
    <div className="flex h-[33px] shrink-0 text-[17px] text-[#444]">
      <button className="relative -mt-[2px] flex w-[131px] items-center gap-[7px] border border-t-0 border-[#c8c8c8] bg-white pl-[9px] pt-[3px] text-[#1976d3]">
        <svg viewBox="0 0 24 24" className="size-6 shrink-0" fill="none" stroke="#48402f">
          <path d="M13 11L4 21" strokeWidth="5" strokeLinecap="round" />
          <path d="M21.500 6.500A5.500 5.500 0 1 1 17 1.800L15.500 5.500l2.500 2.300z" fill="#48402f" strokeWidth="1" />
          <circle cx="4" cy="21" r="1" fill="#fff" stroke="none" />
        </svg>
        Properties
      </button>
      <button className="ml-[9px] flex items-center gap-[6px] pt-px">
        <svg viewBox="0 0 26 24" className="h-6 w-[26px]" fill="none" stroke="#48402f" strokeWidth="1.800">
          <path d="M0 2.500h5M7 2.500h12M7.500 8.500h5M14 8.500h10M7.500 15h5M14 15h10M0 21.500h5M7 21.500h12" />
          <path d="M0 2h4.500M7 8h4.500M7 14.500h4.500M0 21h4.500" strokeWidth="3.500" />
          <path d="M9 9v6M2.500 4v2M9 17v2" strokeWidth="1.400" />
        </svg>
        Outline
      </button>
      <button className="ml-5 flex items-center gap-[7px] pt-px">
        <svg viewBox="0 0 24 24" className="size-6" fill="none">
          <path d="M1 1h22v21H1z" stroke="#666" strokeWidth="1.800" />
          <path d="M0 0h24v6H0z" fill="#666" />
          <path d="M4 11h7M4 14.500h7M4 18h6" stroke="#666" strokeWidth="1.600" />
          <path d="M18 9l6 3.500L18 16l-6-3.500z" fill="#f5c33b" />
          <path d="M12 12.500l6 3.500v8l-6-3.500z" fill="#f0562e" />
          <path d="M24 12.500L18 16v8l6-3.500z" fill="#4cb3e6" />
        </svg>
        Object Repository
      </button>
    </div>
  </aside>
);

const SideStrip = () => (
  <nav className="flex w-[50px] shrink-0 flex-col items-end text-[18px] text-[#444]">
    <button className="flex h-[113px] items-start border-r-[9px] border-[#cdcdcd] pr-1">
      <span className="flex flex-col items-center gap-[6px]">
        <svg viewBox="0 0 24 24" className="size-6" fill="none" stroke="#666" strokeWidth="1.600">
          <path d="M3 9V1h19v7h-2V23h-4M18 1v7h3" />
          <g stroke="#1976d2"><path d="M2 12h4v4H2zM2 19h4v4H2zM10 19h4v4h-4z" /><circle cx="12" cy="14" r="2.600" fill="#1976d2" /></g>
        </svg>
        <span className="whitespace-nowrap leading-[22px] [writing-mode:vertical-rl]">Resources</span>
      </span>
    </button>
    <button className="mt-[18px] flex h-[172px] items-start border-r-[9px] border-[#cdcdcd] pr-1">
      <span className="flex flex-col items-center gap-[9px] pt-[2px]">
        <svg viewBox="0 0 24 20" className="h-5 w-6" fill="none" stroke="#666" strokeWidth="1.600">
          <path d="M1 1h20v5l2 2v4l-2 2v5H1z" />
          <path d="M21 6c-4 0-4 8 0 8" />
          <g stroke="#1976d2" strokeWidth="1.300">
            <path d="M6 6v7M11 6v8M5 6h10M14 11v5" />
            <path d="M5 13.500h2M10 13.500h2" strokeWidth="3" />
          </g>
        </svg>
        <span className="whitespace-nowrap leading-[22px] [writing-mode:vertical-rl]">Activity Coverage</span>
      </span>
    </button>
  </nav>
);

/* ---------- page ---------- */

export default function App() {
  return (
    <div className='flex h-screen w-full flex-col overflow-hidden bg-[#f1f1f1] font-["Open_Sans","Noto_Sans",sans-serif]'>
      <TitleBar />
      <Ribbon />
      <div className="flex min-h-0 flex-1 pl-[10px] pt-[9px]">
        <LeftPanel />
        <div className="w-[10px] shrink-0" />
        <Designer />
        <div className="w-[10px] shrink-0" />
        <RightPanel />
        <SideStrip />
      </div>
      <div className="flex h-[51px] shrink-0 items-end gap-5 pl-[9px] text-[17px] text-[#444]">
        {["Output", "Error List", "Find References", "Breakpoints"].map((t) => (
          <button key={t} className="border-b-[9px] border-[#cdcdcd] leading-[26px]">{t}</button>
        ))}
      </div>
      <footer className="flex h-[38px] shrink-0 items-center border-b-2 border-[#cbd5de] bg-[#1976d3] pr-[23px] text-[18px] text-white">
        <button aria-label="Profile" className="ml-auto flex items-center gap-[6px]">
          <svg viewBox="0 0 15 18" className="h-[18px] w-[15px]"><path d="M0 0h15v18H0z" fill="#fff" /><circle cx="7.500" cy="9" r="3.500" fill="none" stroke="#1976d2" strokeWidth="1.500" /></svg>
          <svg viewBox="0 0 6 4" className="h-1 w-[6px] fill-[#8fbdec]"><path d="M0 0h6L3 4z" /></svg>
        </button>
        <button className="ml-6 flex items-center gap-[9px]">
          <span className="size-3 rounded-full bg-white" />
          Orchestrator Not Connected
        </button>
        <button className="ml-[42px] flex items-center gap-[6px]">
          <svg viewBox="0 0 18 18" className="size-[18px]" stroke="#fff" strokeWidth="5"><path d="M9 0v18M0 9h18" /></svg>
          Add To Source Control
          <svg viewBox="0 0 6 4" className="h-1 w-[6px] fill-[#8fbdec]"><path d="M0 0h6L3 4z" /></svg>
        </button>
        <span className="ml-[30px] font-semibold">VB</span>
      </footer>
    </div>
  );
}
